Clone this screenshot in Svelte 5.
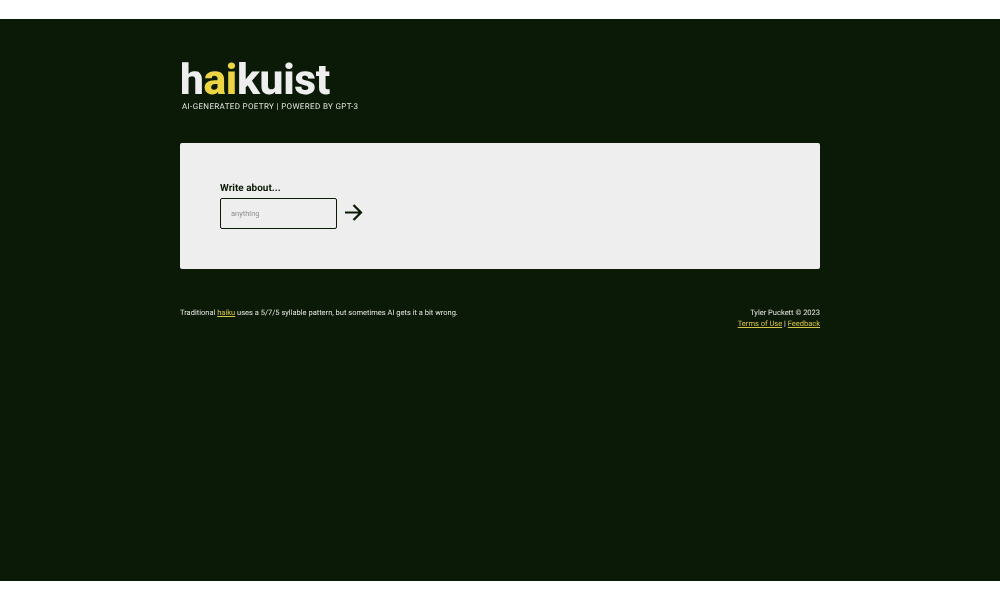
<script lang="ts">
    // Page content
    const tagline = 'AI-GENERATED POETRY | POWERED BY GPT-3';
    let topic = '';
</script>

<style>
    :global(body) {
        background-color: #fff;
        font-family: 'Roboto', 'Liberation Sans', sans-serif;
        text-rendering: geometricPrecision;
    }

    .page {
        height: 562px;
        margin: 19px 0;
        background-color: #0a1a06;
        color: #e4e4e0;
    }

    .container {
        width: 640px;
        margin: 0 auto;
        padding-top: 41px;
        will-change: transform;
    }

    /* Logo */
    h1 {
        margin: 0;
        font-size: 42.5px;
        line-height: 42px;
        font-weight: 800;
        letter-spacing: -0.35px;
        color: #eeeeee;
    }

    h1 span {
        color: #ecd444;
    }

    .tagline {
        margin: 0 0 0 2px;
        font-size: 8px;
        line-height: 10px;
        letter-spacing: 0.35px;
    }

    /* Form card */
    .card {
        display: flex;
        flex-direction: column;
        height: 126px;
        box-sizing: border-box;
        margin-top: 31px;
        padding: 39px 40px 0;
        background-color: #eeeeee;
        border-radius: 2px;
        color: #0a1a06;
    }

    label {
        font-size: 10px;
        line-height: 12px;
        font-weight: 700;
        padding-top: 1px;
    }

    .row {
        display: flex;
        align-items: center;
        gap: 7px;
        margin-top: 3px;
    }

    input {
        width: 117px;
        height: 31px;
        box-sizing: border-box;
        padding: 0 10px;
        background: transparent;
        border: 1.5px solid #0a1a06;
        border-radius: 2px;
        font-family: inherit;
        font-size: 7.5px;
        outline: none;
    }

    input::placeholder {
        color: #8f8f8f;
    }

    button {
        display: flex;
        padding: 0 0 2px;
        background: none;
        border: none;
    }

    /* Footer */
    footer {
        display: flex;
        justify-content: space-between;
        margin-top: 38px;
        font-size: 7.5px;
        line-height: 11px;
    }

    footer p {
        margin: 0;
    }

    .credits {
        text-align: right;
    }

    a {
        color: #d9c44a;
    }
</style>

<div class="page">
    <div class="container">
        <h1>h<span>ai</span>kuist</h1>
        <p class="tagline">{tagline}</p>

        <div class="card">
            <label for="topic">Write about...</label>
            <div class="row">
                <input id="topic" type="text" placeholder="anything" bind:value={topic} />
                <button aria-label="Submit">
                    <svg width="19" height="19" viewBox="0 0 19 19" fill="none" stroke="#0a1a06" stroke-width="2.2">
                        <path d="M1 9.5H17M9.5 2L17 9.5L9.5 17" />
                    </svg>
                </button>
            </div>
        </div>

        <footer>
            <p>Traditional <a href="#haiku">haiku</a> uses a 5/7/5 syllable pattern, but sometimes AI gets it a bit wrong.</p>
            <div class="credits">
                <p>Tyler Puckett © 2023</p>
                <p><a href="#terms">Terms of Use</a> | <a href="#feedback">Feedback</a></p>
            </div>
        </footer>
    </div>
</div>
